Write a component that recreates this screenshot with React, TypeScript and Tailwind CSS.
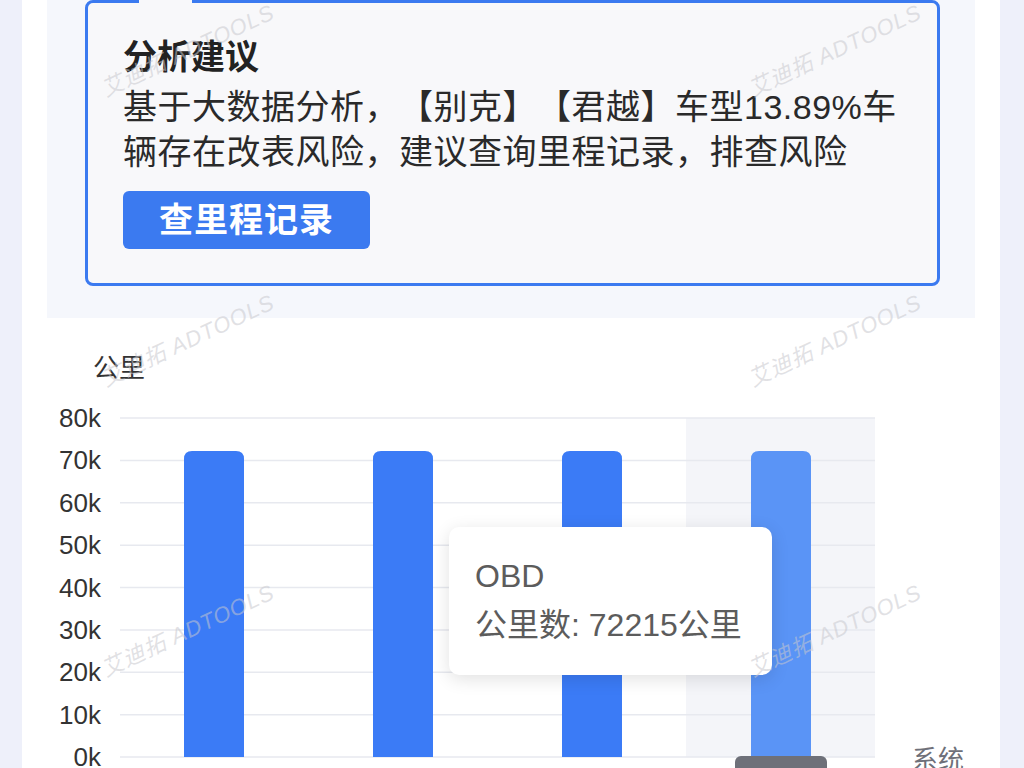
import type { ReactNode } from "react";

const FONT = "font-['Liberation_Sans','Noto_Sans_CJK_SC',sans-serif]";

const yTicks = ["80k", "70k", "60k", "50k", "40k", "30k", "20k", "10k", "0k"];
const bars = [
  { cx: 214, value: 72215 },
  { cx: 403, value: 72215 },
  { cx: 592, value: 72215 },
  { cx: 781, value: 72215, active: true },
];

const TOP = 418;
const BOTTOM = 757;
const MAX = 80000;

function barPath(cx: number, value: number) {
  const w = 60;
  const r = 8;
  const x = cx - w / 2;
  const y = BOTTOM - ((BOTTOM - TOP) * value) / MAX;
  return `M${x} ${BOTTOM} V${y + r} Q${x} ${y} ${x + r} ${y} H${x + w - r} Q${x + w} ${y} ${x + w} ${y + r} V${BOTTOM} Z`;
}

function Watermark() {
  return (
    <div className="flex items-center justify-center">
      <span className="-rotate-[25deg] whitespace-nowrap text-[22px] italic tracking-[1px] text-[rgba(200,200,206,0.55)]">
        艾迪拓 ADTOOLS
      </span>
    </div>
  );
}

// repeated watermark layer on top of the card
function WatermarkLayer() {
  return (
    <div className="pointer-events-none absolute inset-x-0 top-[-95px] grid grid-cols-[332px_962px] grid-rows-[290px_290px_290px]">
      {Array.from({ length: 6 }, (_, i) => (
        <Watermark key={i} />
      ))}
    </div>
  );
}

function MileageChart() {
  return (
    <svg width={978} height={450} viewBox="22 318 978 450" className="block">
      <text x={93} y={377} fontSize={26} fill="#333">
        公里
      </text>
      <rect x={686} y={TOP} width={189} height={BOTTOM - TOP} fill="#f4f5f9" />
      {yTicks.map((t, i) => {
        const y = TOP + ((BOTTOM - TOP) / 8) * i;
        return (
          <g key={t}>
            <line x1={120} x2={875} y1={y} y2={y} stroke="#e7e9ef" strokeWidth={1.5} />
            <text x={101} y={y + 9} fontSize={26} fill="#333" textAnchor="end">
              {t}
            </text>
          </g>
        );
      })}
      {bars.map((b) => (
        <path key={b.cx} d={barPath(b.cx, b.value)} fill={b.active ? "#5a94f6" : "#3b7bf6"} />
      ))}
      <rect x={735} y={756} width={92} height={34} rx={6} fill="#6e7079" />
      <text x={912} y={769} fontSize={26} fill="#6e7079">
        系统
      </text>
    </svg>
  );
}

function Tooltip({ children }: { children: ReactNode }) {
  return (
    <div className="absolute left-[427px] top-[527px] flex h-[148px] w-[323px] flex-col justify-center gap-[14px] rounded-[10px] bg-white pl-[26px] text-[32px] leading-[35px] text-[#5c5c5c] shadow-[0_4px_18px_rgba(0,0,0,0.12)]">
      {children}
    </div>
  );
}

export default function App() {
  return (
    <div className={`h-[768px] overflow-hidden bg-[#eef0fa] pl-[22px] pr-[24px] ${FONT}`}>
      <div className="relative h-[768px] overflow-hidden bg-white">
        <section className="mx-[25px] bg-[#f5f7fc] pb-[32px] pl-[38px] pr-[35px]">
          <div className="relative h-[286px] rounded-[8px] border-[3px] border-[#3b7af0] bg-[#f8f8fa] pl-[35px] pr-[20px] pt-[34px]">
            <div className="absolute left-[51px] top-[-3px] h-[3px] w-[53px] bg-[#f8f8fa]" />
            <h3 className="text-[34px] font-bold leading-[40px] text-[#222]">分析建议</h3>
            <p className="mt-[8px] text-[34px] leading-[45px] tracking-[0.5px] text-[#2a2a2a] [text-spacing-trim:space-all]">
              基于大数据分析，【别克】【君越】车型13.89%车辆存在改表风险，建议查询里程记录，排查风险
            </p>
            <button
              type="button"
              className="mt-[16px] flex h-[58px] w-[247px] items-center justify-center rounded-[6px] bg-[#3b7af0] text-[34px] font-bold tracking-[1px] text-white"
            >
              查里程记录
            </button>
          </div>
        </section>

        <MileageChart />

        <Tooltip>
          <div>OBD</div>
          <div>公里数: 72215公里</div>
        </Tooltip>

        <WatermarkLayer />
      </div>
    </div>
  );
}
